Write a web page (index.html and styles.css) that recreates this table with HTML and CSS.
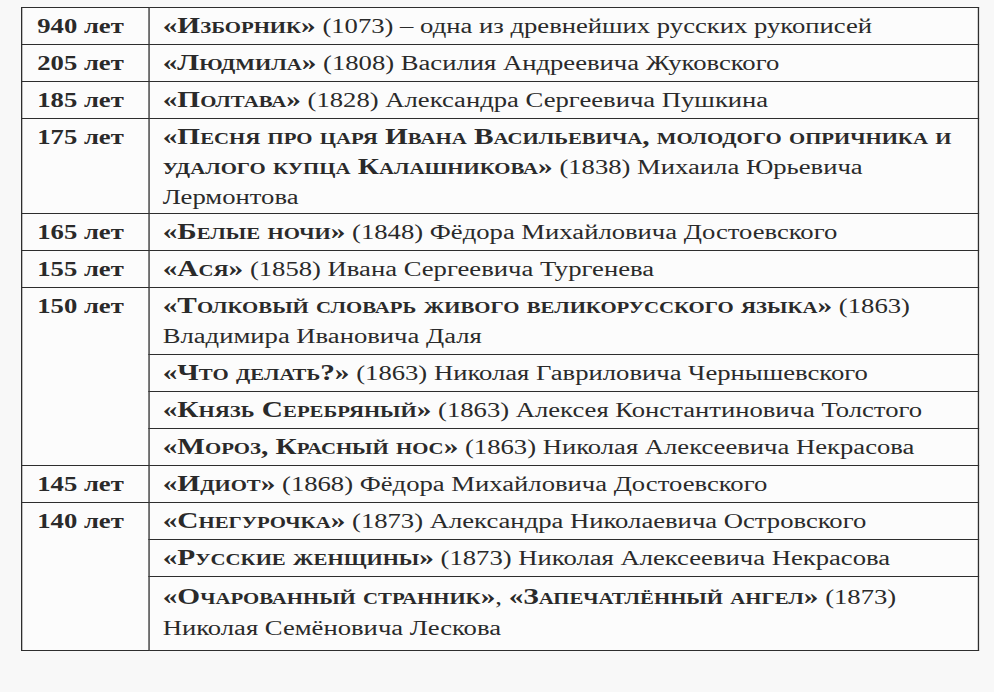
FILE: index.html
```html
<!DOCTYPE html>
<html lang="ru">
<head>
<meta charset="utf-8">
<title>Юбилеи книг</title>
<link rel="stylesheet" href="styles.css">
</head>
<body>
<div class="sheet">
<table class="jubilee">
  <colgroup><col class="c-age"><col class="c-work"></colgroup>
  <tbody>
    <tr><td class="age">940 лет</td><td class="work"><span class="title">«Изборник»</span> (1073) – одна из древнейших русских рукописей</td></tr>
    <tr><td class="age">205 лет</td><td class="work"><span class="title">«Людмила»</span> (1808) Василия Андреевича Жуковского</td></tr>
    <tr><td class="age">185 лет</td><td class="work"><span class="title">«Полтава»</span> (1828) Александра Сергеевича Пушкина</td></tr>
    <tr class="tight"><td class="age">175 лет</td><td class="work"><span class="title">«Песня про царя Ивана Васильевича, молодого опричника и удалого купца Калашникова»</span> (1838) Михаила Юрьевича Лермонтова</td></tr>
    <tr><td class="age">165 лет</td><td class="work"><span class="title">«Белые ночи»</span> (1848) Фёдора Михайловича Достоевского</td></tr>
    <tr><td class="age">155 лет</td><td class="work"><span class="title">«Ася»</span> (1858) Ивана Сергеевича Тургенева</td></tr>
    <tr><td class="age" rowspan="4">150 лет</td><td class="work"><span class="title">«Толковый словарь живого великорусского языка»</span> (1863)<br>Владимира Ивановича Даля</td></tr>
    <tr><td class="work"><span class="title">«Что делать?»</span> (1863) Николая Гавриловича Чернышевского</td></tr>
    <tr><td class="work"><span class="title">«Князь Серебряный»</span> (1863) Алексея Константиновича Толстого</td></tr>
    <tr><td class="work"><span class="title">«Мороз, Красный нос»</span> (1863) Николая Алексеевича Некрасова</td></tr>
    <tr><td class="age">145 лет</td><td class="work"><span class="title">«Идиот»</span> (1868) Фёдора Михайловича Достоевского</td></tr>
    <tr><td class="age" rowspan="3">140 лет</td><td class="work"><span class="title">«Снегурочка»</span> (1873) Александра Николаевича Островского</td></tr>
    <tr><td class="work"><span class="title">«Русские женщины»</span> (1873) Николая Алексеевича Некрасова</td></tr>
    <tr><td class="work last"><span class="title">«Очарованный странник»</span>, <span class="title">«Запечатлённый ангел»</span> (1873)<br>Николая Семёновича Лескова</td></tr>
  </tbody>
</table>
</div>
</body>
</html>
```

FILE: styles.css
```css
html, body {
  margin: 0;
  padding: 0;
  background: #f8f8f8;
}
body {
  font-family: "Liberation Serif", "Times New Roman", serif;
  font-size: 20.5px;
  color: #2a2a2a;
}
.sheet {
  padding: 7px 0 0 21px;
}
/* the scanned original is stretched horizontally by ~1.3 */
.jubilee {
  border-collapse: collapse;
  width: 737px;
  background: #fcfcfc;
  transform: scaleX(1.3);
  transform-origin: left top;
}
.c-age { width: 98px; }
.jubilee td {
  border-top: 1.5px solid #2e2e2e;
  border-bottom: 1.5px solid #2e2e2e;
  border-left: 1.2px solid #2e2e2e;
  border-right: 1.2px solid #2e2e2e;
  line-height: 30px;
  padding: 3px 0;
  vertical-align: top;
}
.tight td {
  padding-bottom: 1px;
}
.age {
  font-weight: bold;
  padding-left: 11.5px !important;
}
.work {
  padding-left: 10px !important;
}
.work.last {
  padding-top: 5px !important;
  padding-bottom: 6px !important;
  line-height: 31px;
}
.title {
  font-weight: bold;
  font-variant: small-caps;
  font-size: 1.1em;
  line-height: 1;
}
```
